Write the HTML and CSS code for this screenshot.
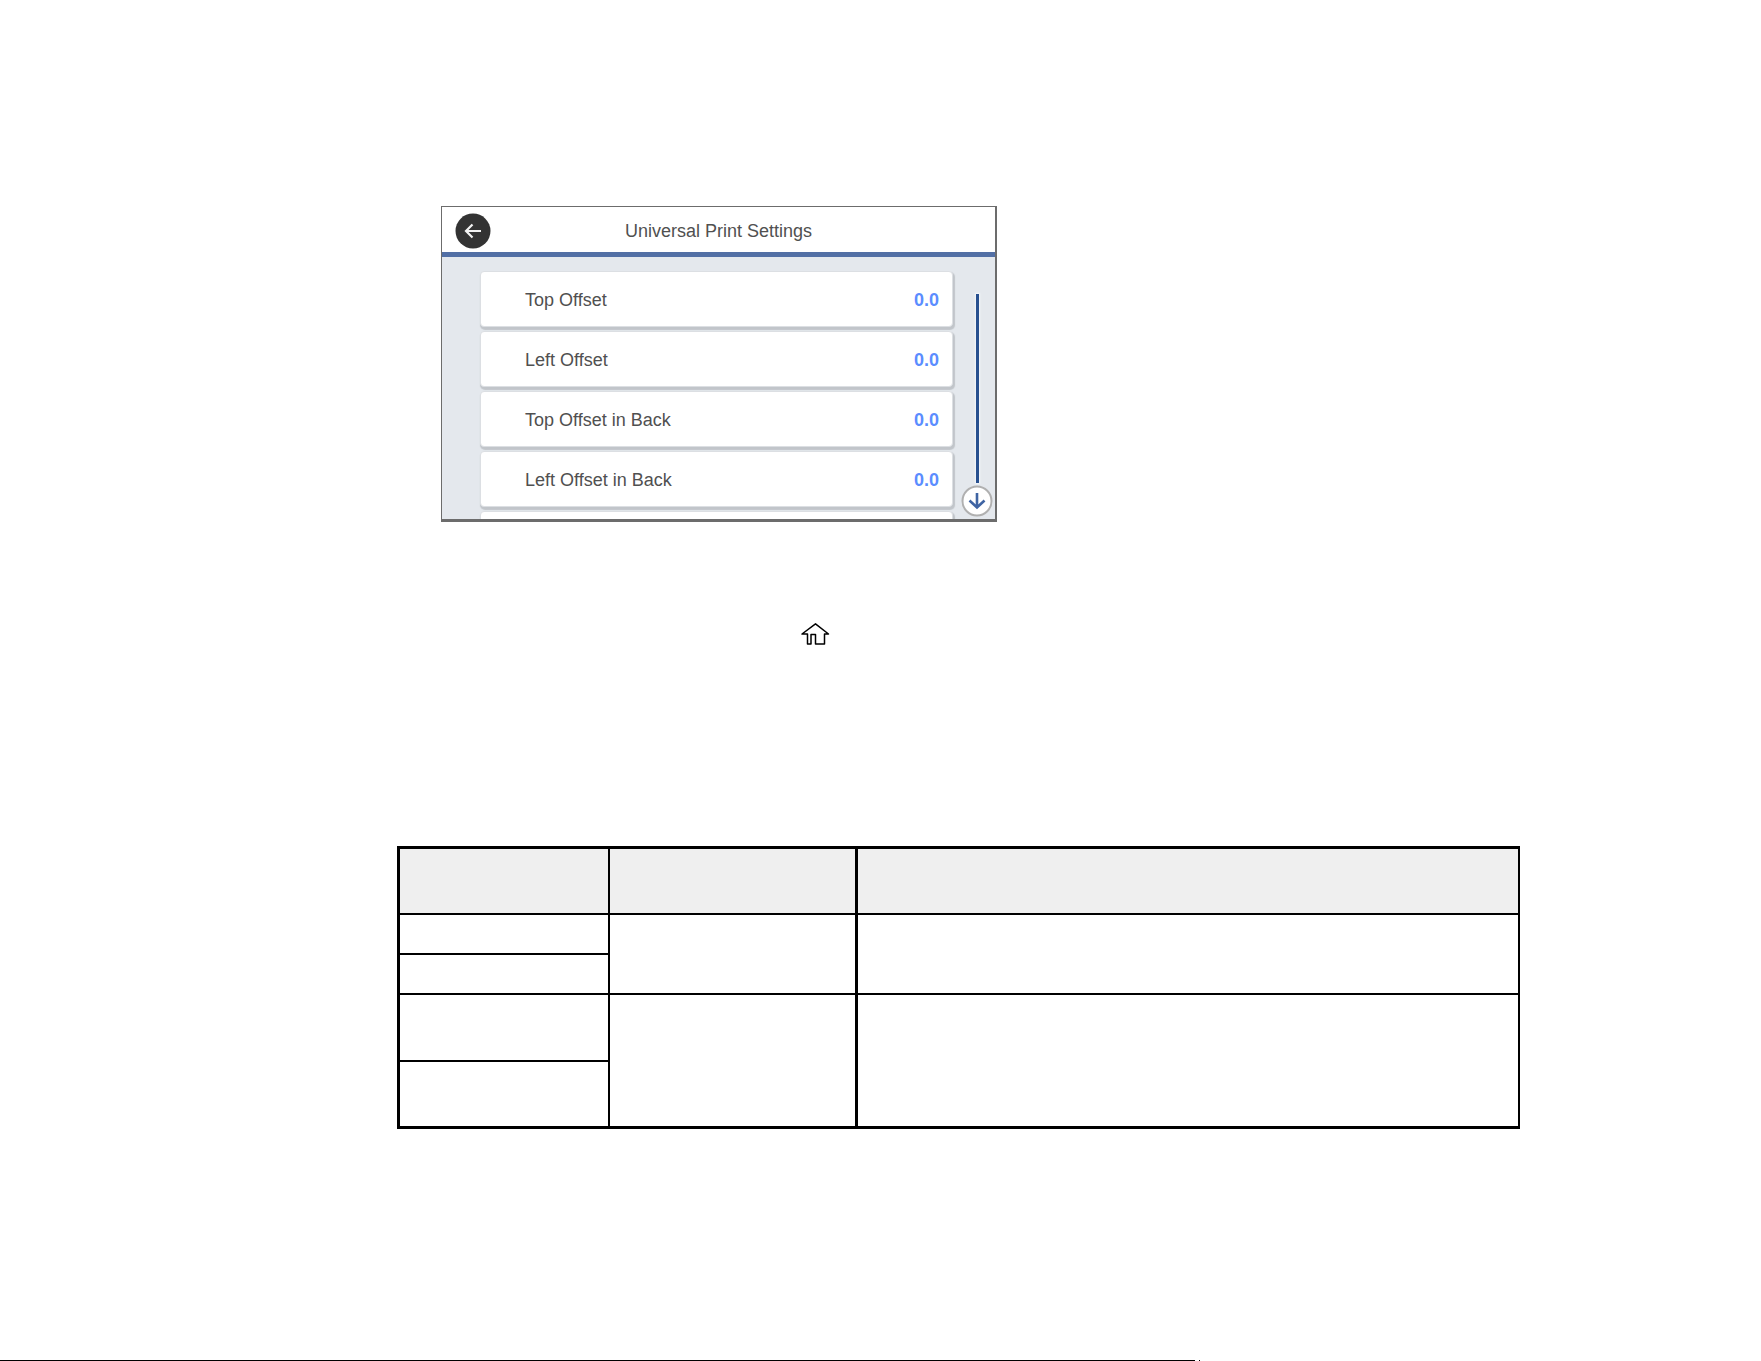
FILE: index.html
```html
<!DOCTYPE html>
<html lang="en">
<head>
<meta charset="utf-8">
<title>Universal Print Settings</title>
<link rel="stylesheet" href="styles.css">
</head>
<body>
<main class="content">
  <section class="screen">
    <header class="screen-header">
      <button class="back" type="button" aria-label="Back">
        <svg width="36" height="36" viewBox="0 0 36 36" aria-hidden="true">
          <circle cx="18" cy="18" r="17.5" fill="#333"/>
          <path d="M26 18H11M17.500 11.500L11 18l6.500 6.500" fill="none" stroke="#f2f2f2" stroke-width="2.200"/>
        </svg>
      </button>
      <h1 class="screen-title">Universal Print Settings</h1>
    </header>
    <div class="screen-body">
      <div class="options">
        <button class="option" type="button"><span>Top Offset</span><span class="value">0.0</span></button>
        <button class="option" type="button"><span>Left Offset</span><span class="value">0.0</span></button>
        <button class="option" type="button"><span>Top Offset in Back</span><span class="value">0.0</span></button>
        <button class="option" type="button"><span>Left Offset in Back</span><span class="value">0.0</span></button>
        <div class="option"></div>
      </div>
      <div class="scroller">
        <div class="track"></div>
        <button class="down" type="button" aria-label="Scroll down">
          <svg width="32" height="32" viewBox="0 0 32 32" aria-hidden="true">
            <circle cx="16" cy="16" r="14.500" fill="#fff" stroke="#b0b0b0" stroke-width="2"/>
            <path d="M16 8v14.500M8.500 15.500l7.500 7 7.500-7" fill="none" stroke="#3f64a3" stroke-width="2.600"/>
          </svg>
        </button>
      </div>
    </div>
  </section>
  <div class="home">
    <svg width="30" height="24" viewBox="0 0 30 24" role="img" aria-label="Home">
      <path d="M15.500 1.800L2 12h5.500v10H11v-9.500h4.500V22h9V12h4z" fill="#fff" stroke="#000" stroke-width="1.500" stroke-linejoin="round"/>
    </svg>
  </div>
  <table class="settings">
    <colgroup><col class="col-setting"><col class="col-options"><col></colgroup>
    <thead>
      <tr class="row-head"><th></th><th></th><th></th></tr>
    </thead>
    <tbody>
      <tr class="row-short"><td></td><td rowspan="2"></td><td rowspan="2"></td></tr>
      <tr class="row-short"><td></td></tr>
      <tr class="row-tall"><td></td><td rowspan="2" class="last"></td><td rowspan="2" class="last"></td></tr>
      <tr class="row-tall"><td class="last"></td></tr>
    </tbody>
  </table>
</main>
<footer class="page-end"><span class="rule"></span><span class="dot"></span></footer>
</body>
</html>
```
FILE: styles.css
```css
* { box-sizing: border-box; }

body {
  margin: 0;
  min-height: 100vh;
  display: flex;
  flex-direction: column;
  background: #fff;
  font-family: "Liberation Sans", Arial, sans-serif;
}

button {
  padding: 0;
  border: 0;
  background: none;
  font: inherit;
  color: inherit;
  cursor: pointer;
}

svg { display: block; }

.content {
  flex: 1;
  padding: 206px 241px 0 397px;
}

/* Printer control panel */
.screen {
  max-width: 556px;
  height: 316px;
  margin-left: 44px;
  display: flex;
  flex-direction: column;
  overflow: hidden;
  border: solid #6c6c6c;
  border-width: 1px 2px 3px 1px;
  background: #e4e8ed;
  color: #505050;
  font-size: 18px;
  line-height: 24px;
}

.screen-header {
  height: 50px;
  flex: none;
  display: grid;
  grid-template-columns: 36px 1fr 36px;
  align-items: center;
  padding: 0 13px;
  border-bottom: 5px solid #526fa5;
  background: #fff;
}

.back { padding-top: 2px; }

.screen-title {
  margin: 0;
  padding-top: 2px;
  font-size: 18px;
  font-weight: 400;
  text-align: center;
}

.screen-body {
  flex: 1;
  min-height: 0;
  display: flex;
  gap: 8px;
  padding-left: 38px;
}

.options {
  flex: 1;
  display: flex;
  flex-direction: column;
  gap: 4px;
  padding-top: 14px;
}

.option {
  height: 56px;
  flex: none;
  display: flex;
  align-items: center;
  justify-content: space-between;
  padding: 2px 13px 0 44px;
  border: 1px solid #dcdfe3;
  border-radius: 4px;
  background: #fff;
  box-shadow: 1px 2px 1px 1px #c1c5ca;
  text-align: left;
}

.value {
  color: #5b8dff;
  font-weight: 700;
}

.scroller {
  width: 32px;
  display: flex;
  flex-direction: column;
  align-items: center;
  gap: 2px;
  margin-right: 2px;
  padding-top: 37px;
}

.track {
  width: 3px;
  height: 189px;
  background: #27508f;
  box-shadow: 0 0 2px 1px #f4f7fb;
}

.home { padding: 100px 0 0 403px; }

/* Settings table */
.settings {
  width: 100%;
  margin-top: 200px;
  table-layout: fixed;
  border-collapse: separate;
  border-spacing: 0;
}

.col-setting { width: 213px; }
.col-options { width: 248px; }
.row-head { height: 69px; }
.row-short { height: 40px; }
.row-tall { height: 67px; }

.settings th,
.settings td {
  padding: 0;
  border: 0 solid #000;
  border-right-width: 2px;
  border-bottom-width: 2px;
}

.settings th {
  border-top-width: 3px;
  background: #efefef;
}

.settings tr > :first-child { border-left-width: 3px; }

/* The single-cell rows hold only the first column */
.settings tr > :first-child:last-child { border-right-width: 2px; }

.settings tr > :nth-child(2) { border-right-width: 3px; }

.settings .last { border-bottom-width: 3px; }

.page-end {
  display: flex;
  gap: 4px;
  height: 1px;
  padding-right: 561px;
}

.rule {
  flex: 1;
  background: #000;
}

.dot {
  width: 1px;
  background: #000;
}
```
